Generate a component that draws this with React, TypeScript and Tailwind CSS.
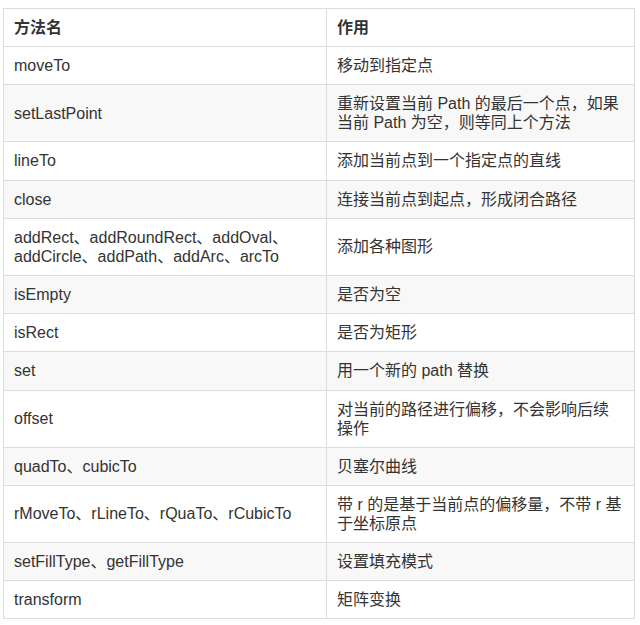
const rows: [string, string][] = [
  ["moveTo", "移动到指定点"],
  ["setLastPoint", "重新设置当前 Path 的最后一个点，如果当前 Path 为空，则等同上个方法"],
  ["lineTo", "添加当前点到一个指定点的直线"],
  ["close", "连接当前点到起点，形成闭合路径"],
  ["addRect、addRoundRect、addOval、addCircle、addPath、addArc、arcTo", "添加各种图形"],
  ["isEmpty", "是否为空"],
  ["isRect", "是否为矩形"],
  ["set", "用一个新的 path 替换"],
  ["offset", "对当前的路径进行偏移，不会影响后续操作"],
  ["quadTo、cubicTo", "贝塞尔曲线"],
  ["rMoveTo、rLineTo、rQuaTo、rCubicTo", "带 r 的是基于当前点的偏移量，不带 r 基于坐标原点"],
  ["setFillType、getFillType", "设置填充模式"],
  ["transform", "矩阵变换"],
];

export default function App() {
  return (
    <div
      className="w-[640px] h-[625px] bg-white pt-[8px] pl-[3px]"
      style={{ fontFamily: '"Liberation Sans", "Noto Sans CJK SC", sans-serif' }}
    >
      <table className="w-[632px] table-fixed border-collapse border border-[#dcdcdc] text-[16px] leading-[19px] text-[#333]">
        <colgroup>
          <col className="w-[323px]" />
          <col />
        </colgroup>
        <thead>
          <tr className="bg-white">
            <th className="border border-[#dcdcdc] px-[10px] py-[9px] text-left font-bold">方法名</th>
            <th className="border border-[#dcdcdc] px-[10px] py-[9px] text-left font-bold">作用</th>
          </tr>
        </thead>
        <tbody>
          {rows.map(([name, desc], i) => (
            <tr key={name} className={i % 2 === 1 ? "bg-[#f8f8f8]" : "bg-white"}>
              <td className="border border-[#dcdcdc] px-[10px] py-[9.1px] align-middle">{name}</td>
              <td className="border border-[#dcdcdc] px-[10px] py-[9.1px] align-middle">{desc}</td>
            </tr>
          ))}
        </tbody>
      </table>
    </div>
  );
}
